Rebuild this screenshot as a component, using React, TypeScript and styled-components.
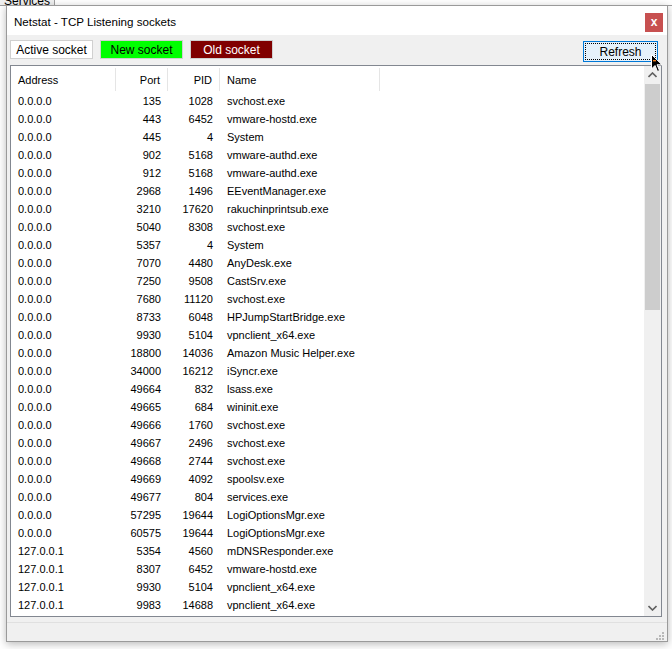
import React from "react";
import styled, { createGlobalStyle } from "styled-components";

type Socket = { address: string; port: number; pid: number; name: string };

const sockets: Socket[] = [
  { address: "0.0.0.0", port: 135, pid: 1028, name: "svchost.exe" },
  { address: "0.0.0.0", port: 443, pid: 6452, name: "vmware-hostd.exe" },
  { address: "0.0.0.0", port: 445, pid: 4, name: "System" },
  { address: "0.0.0.0", port: 902, pid: 5168, name: "vmware-authd.exe" },
  { address: "0.0.0.0", port: 912, pid: 5168, name: "vmware-authd.exe" },
  { address: "0.0.0.0", port: 2968, pid: 1496, name: "EEventManager.exe" },
  { address: "0.0.0.0", port: 3210, pid: 17620, name: "rakuchinprintsub.exe" },
  { address: "0.0.0.0", port: 5040, pid: 8308, name: "svchost.exe" },
  { address: "0.0.0.0", port: 5357, pid: 4, name: "System" },
  { address: "0.0.0.0", port: 7070, pid: 4480, name: "AnyDesk.exe" },
  { address: "0.0.0.0", port: 7250, pid: 9508, name: "CastSrv.exe" },
  { address: "0.0.0.0", port: 7680, pid: 11120, name: "svchost.exe" },
  { address: "0.0.0.0", port: 8733, pid: 6048, name: "HPJumpStartBridge.exe" },
  { address: "0.0.0.0", port: 9930, pid: 5104, name: "vpnclient_x64.exe" },
  { address: "0.0.0.0", port: 18800, pid: 14036, name: "Amazon Music Helper.exe" },
  { address: "0.0.0.0", port: 34000, pid: 16212, name: "iSyncr.exe" },
  { address: "0.0.0.0", port: 49664, pid: 832, name: "lsass.exe" },
  { address: "0.0.0.0", port: 49665, pid: 684, name: "wininit.exe" },
  { address: "0.0.0.0", port: 49666, pid: 1760, name: "svchost.exe" },
  { address: "0.0.0.0", port: 49667, pid: 2496, name: "svchost.exe" },
  { address: "0.0.0.0", port: 49668, pid: 2744, name: "svchost.exe" },
  { address: "0.0.0.0", port: 49669, pid: 4092, name: "spoolsv.exe" },
  { address: "0.0.0.0", port: 49677, pid: 804, name: "services.exe" },
  { address: "0.0.0.0", port: 57295, pid: 19644, name: "LogiOptionsMgr.exe" },
  { address: "0.0.0.0", port: 60575, pid: 19644, name: "LogiOptionsMgr.exe" },
  { address: "127.0.0.1", port: 5354, pid: 4560, name: "mDNSResponder.exe" },
  { address: "127.0.0.1", port: 8307, pid: 6452, name: "vmware-hostd.exe" },
  { address: "127.0.0.1", port: 9930, pid: 5104, name: "vpnclient_x64.exe" },
  { address: "127.0.0.1", port: 9983, pid: 14688, name: "vpnclient_x64.exe" },
];

const GlobalStyle = createGlobalStyle`
  html, body {
    margin: 0;
    padding: 0;
    background: #ffffff;
  }
  body {
    font-family: "Liberation Sans", Arial, sans-serif;
    font-size: 12px;
    color: #000;
  }
`;

export default function App() {
  return (
    <>
      <GlobalStyle />
      <Desktop>
        <BackTab>Services</BackTab>
        <BackStrip />
        <Window>
          <TitleBar>
            <Title>Netstat - TCP Listening sockets</Title>
            <CloseButton>x</CloseButton>
          </TitleBar>
          <Toolbar>
            <Legend $bg="#ffffff" $fg="#000000">Active socket</Legend>
            <Legend $bg="#00ff00" $fg="#000000">New socket</Legend>
            <Legend $bg="#800000" $fg="#ffffff">Old socket</Legend>
            <Spacer />
            <RefreshButton>
              <FocusRect>Refresh</FocusRect>
            </RefreshButton>
          </Toolbar>
          <ListView>
            <ListContent>
              <HeaderRow>
                <HeaderCell>Address</HeaderCell>
                <HeaderCell $right>Port</HeaderCell>
                <HeaderCell $right>PID</HeaderCell>
                <HeaderCell>Name</HeaderCell>
                <HeaderCell $last />
              </HeaderRow>
              {sockets.map((s, i) => (
                <Row key={i}>
                  <Cell>{s.address}</Cell>
                  <Cell $right>{s.port}</Cell>
                  <Cell $right>{s.pid}</Cell>
                  <Cell>{s.name}</Cell>
                </Row>
              ))}
            </ListContent>
            <ScrollBar>
              <ScrollArrow>
                <svg width="9" height="6" viewBox="0 0 9 6">
                  <path d="M0.5 5 L4.5 1 L8.5 5" fill="none" stroke="#606060" strokeWidth="1.6" />
                </svg>
              </ScrollArrow>
              <ScrollTrack>
                <ScrollThumb />
              </ScrollTrack>
              <ScrollArrow>
                <svg width="9" height="6" viewBox="0 0 9 6">
                  <path d="M0.5 1 L4.5 5 L8.5 1" fill="none" stroke="#606060" strokeWidth="1.6" />
                </svg>
              </ScrollArrow>
            </ScrollBar>
          </ListView>
          <StatusBar>
            <Grip>
              <svg width="9" height="9" viewBox="0 0 9 9">
                <g fill="#b8b8b8">
                  <rect x="6" y="0" width="2" height="2" />
                  <rect x="3" y="3" width="2" height="2" />
                  <rect x="6" y="3" width="2" height="2" />
                  <rect x="0" y="6" width="2" height="2" />
                  <rect x="3" y="6" width="2" height="2" />
                  <rect x="6" y="6" width="2" height="2" />
                </g>
              </svg>
            </Grip>
          </StatusBar>
        </Window>
        <Cursor>
          <svg width="12" height="19" viewBox="0 0 12 19">
            <path d="M0.5 0.5 L0.5 15 L4 11.5 L6.5 17.5 L8.5 16.5 L6 10.8 L11 10.8 Z" fill="#000" stroke="#fff" strokeWidth="1" />
            <rect x="2" y="6" width="3" height="1.4" fill="#f07a1a" />
          </svg>
        </Cursor>
      </Desktop>
    </>
  );
}

const Desktop = styled.div`
  position: relative;
  width: 672px;
  height: 649px;
  overflow: hidden;
  background: #ffffff;
`;

const BackTab = styled.div`
  position: absolute;
  left: 0;
  top: -5px;
  padding: 0 4px;
  height: 10px;
  font-size: 12px;
  line-height: 12px;
  color: #000;
  border-right: 1px solid #a0a0a0;
  background: #f0f0f0;
`;

const BackStrip = styled.div`
  position: absolute;
  left: 0;
  top: 5px;
  width: 672px;
  height: 1px;
  background: #a0a0a0;
`;

const Window = styled.div`
  position: absolute;
  left: 6px;
  top: 5px;
  width: 662px;
  height: 637px;
  box-sizing: border-box;
  border: 1px solid #9a9a9a;
  background: #f0f0f0;
  display: flex;
  flex-direction: column;
  box-shadow: 0 2px 8px rgba(0, 0, 0, 0.28);
`;

const TitleBar = styled.div`
  height: 29px;
  background: #ffffff;
  display: flex;
  align-items: center;
  justify-content: space-between;
  padding: 0 4px 0 7px;
`;

const Title = styled.div`
  font-size: 11.6px;
  color: #000;
  padding-top: 1px;
`;

const CloseButton = styled.div`
  width: 18px;
  height: 19px;
  margin-top: 3px;
  background: #c75050;
  color: #fff;
  font-weight: bold;
  font-size: 12px;
  display: flex;
  align-items: center;
  justify-content: center;
  line-height: 1;
`;

const Toolbar = styled.div`
  height: 30px;
  display: flex;
  align-items: flex-start;
  gap: 8px;
  padding: 5px 10px 0 3px;
  box-sizing: border-box;
`;

const Legend = styled.div<{ $bg: string; $fg: string }>`
  width: 83px;
  height: 19px;
  box-sizing: border-box;
  border: 1px solid #d0d0d0;
  background: ${(p) => p.$bg};
  color: ${(p) => p.$fg};
  font-size: 12px;
  display: flex;
  align-items: center;
  justify-content: center;
  margin-right: -1px;
`;

const Spacer = styled.div`
  flex: 1;
`;

const RefreshButton = styled.div`
  width: 75px;
  height: 21px;
  margin-top: 1px;
  box-sizing: border-box;
  border: 1px solid #0078d7;
  background: #e5f1fb;
  padding: 1px;
  margin-right: -1px;
`;

const FocusRect = styled.div`
  height: 100%;
  box-sizing: border-box;
  border: 1px dotted #000;
  display: flex;
  align-items: center;
  justify-content: center;
  font-size: 12px;
  color: #000;
`;

const ListView = styled.div`
  flex: 1;
  margin: 0 5px 0 3px;
  border: 1px solid #828790;
  background: #ffffff;
  display: flex;
  min-height: 0;
`;

const ListContent = styled.div`
  flex: 1;
  overflow: hidden;
`;

const columns = "105px 52px 52px 160px 1fr";

const HeaderRow = styled.div`
  display: grid;
  grid-template-columns: ${columns};
  height: 26px;
`;

const HeaderCell = styled.div<{ $right?: boolean; $last?: boolean }>`
  display: flex;
  align-items: center;
  justify-content: ${(p) => (p.$right ? "flex-end" : "flex-start")};
  padding: 0 7px 0 7px;
  margin: 2px 0 1px;
  border-right: ${(p) => (p.$last ? "none" : "1px solid #e5e5e5")};
  color: #000;
  font-size: 11px;
`;

const Row = styled.div`
  display: grid;
  grid-template-columns: ${columns};
  height: 18px;
  align-items: center;
`;

const Cell = styled.div<{ $right?: boolean }>`
  padding: 0 7px;
  text-align: ${(p) => (p.$right ? "right" : "left")};
  white-space: nowrap;
  font-size: 11px;
  color: #000;
`;

const ScrollBar = styled.div`
  width: 17px;
  background: #f0f0f0;
  display: flex;
  flex-direction: column;
`;

const ScrollArrow = styled.div`
  height: 17px;
  display: flex;
  align-items: center;
  justify-content: center;
`;

const ScrollTrack = styled.div`
  flex: 1;
`;

const ScrollThumb = styled.div`
  margin: 1px 1px 0 1px;
  height: 226px;
  background: #cdcdcd;
`;

const StatusBar = styled.div`
  height: 19px;
  border-top: 1px solid #e0e0e0;
  margin-top: 5px;
  box-sizing: border-box;
  display: flex;
  justify-content: flex-end;
  align-items: flex-end;
  padding: 0 2px 2px 0;
`;

const Grip = styled.div`
  width: 9px;
  height: 9px;
`;

const Cursor = styled.div`
  position: absolute;
  left: 651px;
  top: 54px;
  width: 12px;
  height: 19px;
`;
